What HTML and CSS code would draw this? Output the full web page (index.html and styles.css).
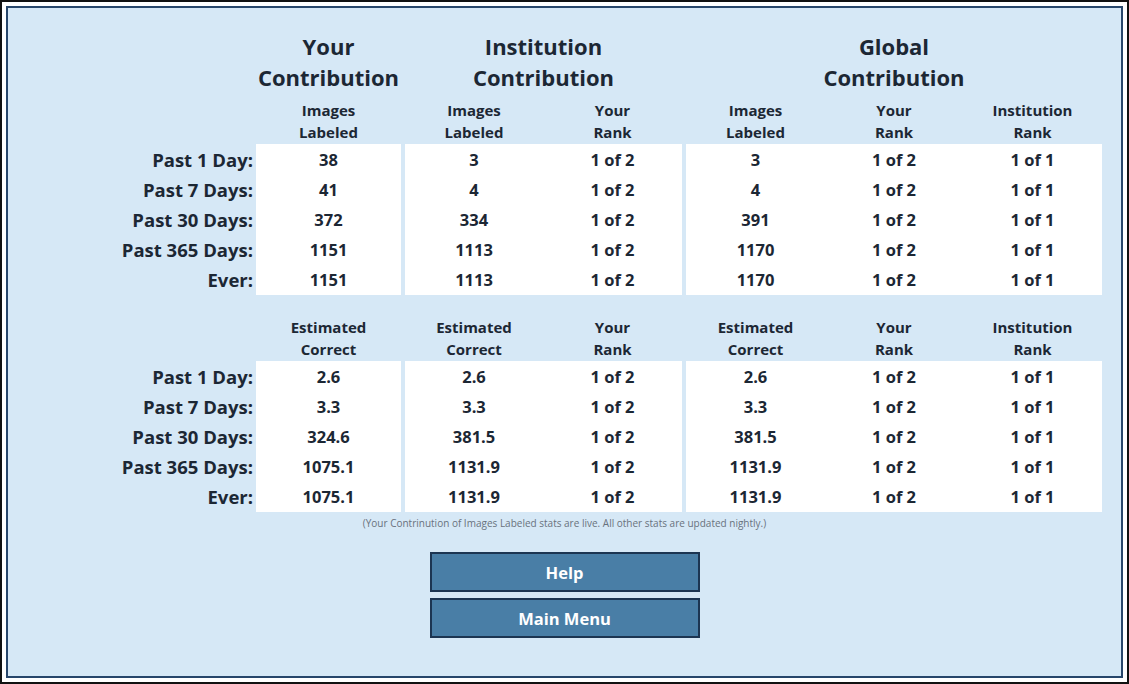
FILE: index.html
```html
<!DOCTYPE html>
<html>
<head>
<meta charset="utf-8">
<link rel="stylesheet" href="styles.css">
</head>
<body>
<div class="outer">
  <div class="inner">
    <div class="stats first">
      <div class="blank"></div>
      <div class="title c1">Your<br>Contribution</div>
      <div class="gap"></div>
      <div class="title c23">Institution<br>Contribution</div>
      <div class="gap"></div>
      <div class="title c456">Global<br>Contribution</div>

      <div class="blank"></div>
      <div class="sub">Images<br>Labeled</div>
      <div class="gap"></div>
      <div class="sub">Images<br>Labeled</div>
      <div class="sub">Your<br>Rank</div>
      <div class="gap"></div>
      <div class="sub">Images<br>Labeled</div>
      <div class="sub">Your<br>Rank</div>
      <div class="sub">Institution<br>Rank</div>

      <div class="label">Past 1 Day:</div>
      <div class="cell">38</div><div class="gap"></div>
      <div class="cell">3</div><div class="cell">1 of 2</div><div class="gap"></div>
      <div class="cell">3</div><div class="cell">1 of 2</div><div class="cell">1 of 1</div>

      <div class="label">Past 7 Days:</div>
      <div class="cell">41</div><div class="gap"></div>
      <div class="cell">4</div><div class="cell">1 of 2</div><div class="gap"></div>
      <div class="cell">4</div><div class="cell">1 of 2</div><div class="cell">1 of 1</div>

      <div class="label">Past 30 Days:</div>
      <div class="cell">372</div><div class="gap"></div>
      <div class="cell">334</div><div class="cell">1 of 2</div><div class="gap"></div>
      <div class="cell">391</div><div class="cell">1 of 2</div><div class="cell">1 of 1</div>

      <div class="label">Past 365 Days:</div>
      <div class="cell">1151</div><div class="gap"></div>
      <div class="cell">1113</div><div class="cell">1 of 2</div><div class="gap"></div>
      <div class="cell">1170</div><div class="cell">1 of 2</div><div class="cell">1 of 1</div>

      <div class="label">Ever:</div>
      <div class="cell">1151</div><div class="gap"></div>
      <div class="cell">1113</div><div class="cell">1 of 2</div><div class="gap"></div>
      <div class="cell">1170</div><div class="cell">1 of 2</div><div class="cell">1 of 1</div>
    </div>

    <div class="stats second">
      <div class="blank"></div>
      <div class="sub">Estimated<br>Correct</div>
      <div class="gap"></div>
      <div class="sub">Estimated<br>Correct</div>
      <div class="sub">Your<br>Rank</div>
      <div class="gap"></div>
      <div class="sub">Estimated<br>Correct</div>
      <div class="sub">Your<br>Rank</div>
      <div class="sub">Institution<br>Rank</div>

      <div class="label">Past 1 Day:</div>
      <div class="cell">2.6</div><div class="gap"></div>
      <div class="cell">2.6</div><div class="cell">1 of 2</div><div class="gap"></div>
      <div class="cell">2.6</div><div class="cell">1 of 2</div><div class="cell">1 of 1</div>

      <div class="label">Past 7 Days:</div>
      <div class="cell">3.3</div><div class="gap"></div>
      <div class="cell">3.3</div><div class="cell">1 of 2</div><div class="gap"></div>
      <div class="cell">3.3</div><div class="cell">1 of 2</div><div class="cell">1 of 1</div>

      <div class="label">Past 30 Days:</div>
      <div class="cell">324.6</div><div class="gap"></div>
      <div class="cell">381.5</div><div class="cell">1 of 2</div><div class="gap"></div>
      <div class="cell">381.5</div><div class="cell">1 of 2</div><div class="cell">1 of 1</div>

      <div class="label">Past 365 Days:</div>
      <div class="cell">1075.1</div><div class="gap"></div>
      <div class="cell">1131.9</div><div class="cell">1 of 2</div><div class="gap"></div>
      <div class="cell">1131.9</div><div class="cell">1 of 2</div><div class="cell">1 of 1</div>

      <div class="label">Ever:</div>
      <div class="cell">1075.1</div><div class="gap"></div>
      <div class="cell">1131.9</div><div class="cell">1 of 2</div><div class="gap"></div>
      <div class="cell">1131.9</div><div class="cell">1 of 2</div><div class="cell">1 of 1</div>
    </div>

    <p class="note">(Your Contrinution of Images Labeled stats are live. All other stats are updated nightly.)</p>

    <div class="buttons">
      <button class="btn">Help</button>
      <button class="btn">Main Menu</button>
    </div>
  </div>
</div>
</body>
</html>
```
FILE: styles.css
```css
html, body {
  margin: 0;
  padding: 0;
  background: #ffffff;
}
body {
  width: 1129px;
  height: 684px;
  overflow: hidden;
  font-family: "Open Sans", "Noto Sans", "Liberation Sans", sans-serif;
  color: #1c2734;
}
.outer {
  box-sizing: border-box;
  width: 1129px;
  height: 684px;
  border: 2px solid #111111;
  padding: 4px;
  background: #ffffff;
}
.inner {
  box-sizing: border-box;
  height: 100%;
  border: 2px solid #27466b;
  background: #d6e8f6;
  padding-top: 23px;
}
.stats {
  display: grid;
  grid-template-columns: 248px 145px 4px 138px 139px 4px 139px 138px 139px;
  font-weight: 700;
}
.second {
  margin-top: 21px;
}
.title {
  font-size: 22px;
  line-height: 31px;
  text-align: center;
  padding-bottom: 6px;
}
.c23 { grid-column: span 2; }
.c456 { grid-column: span 3; }
.sub {
  font-size: 15px;
  line-height: 22px;
  text-align: center;
  padding-bottom: 1px;
}
.label {
  box-sizing: border-box;
  font-size: 18.5px;
  line-height: 28px;
  padding-top: 2px;
  text-align: right;
  padding-right: 3px;
  height: 30px;
}
.cell {
  box-sizing: border-box;
  background: #ffffff;
  font-size: 16.5px;
  line-height: 28px;
  padding-top: 2px;
  height: 30px;
  text-align: center;
}
.stats > .cell:nth-last-child(-n+9) {
  height: 31px;
}
.note {
  margin: 4px 0 0;
  font-size: 10px;
  line-height: 14px;
  color: #69727d;
  text-align: center;
}
.buttons {
  display: flex;
  flex-direction: column;
  align-items: center;
  gap: 6px;
  margin-top: 22px;
}
.btn {
  box-sizing: border-box;
  width: 270px;
  height: 40px;
  background: #497ea6;
  border: 2px solid #1c3552;
  color: #ffffff;
  font-family: "Open Sans", "Noto Sans", "Liberation Sans", sans-serif;
  font-weight: 700;
  font-size: 16.5px;
  padding: 0;
}
```
